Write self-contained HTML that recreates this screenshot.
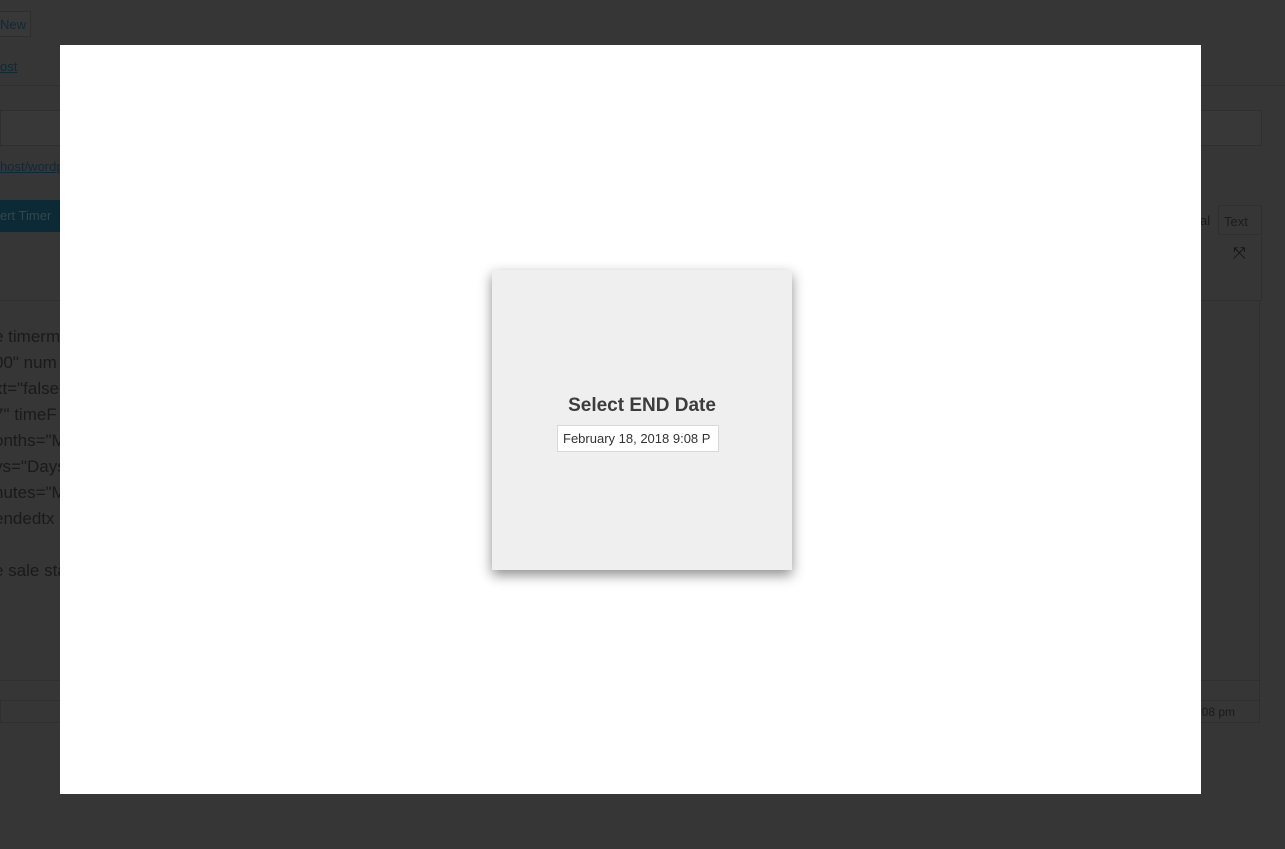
<!DOCTYPE html>
<html><head><style>
*{margin:0;padding:0;box-sizing:border-box}
body{width:1285px;height:849px;background:#363636;position:relative;overflow:hidden;font-family:"Liberation Sans",sans-serif;color:#1a1a1a}
.a{position:absolute}
.ed{font-size:17px;color:#1a1a1a}
</style></head><body>
<div class="a" style="left:-5px;top:11px;width:36px;height:26px;border:1px solid #2e2e2e;background:#383838;font-size:13px;padding:5px 0 0 4px;color:#0e2a36">New</div>
<div class="a" style="left:0;top:59px;font-size:13px;color:#0e2a36;text-decoration:underline">ost</div>
<div class="a" style="left:0;top:85px;width:1285px;height:1px;background:#2f2f2f"></div>
<div class="a" style="left:0;top:110px;width:1262px;height:36px;border:1px solid #2f2f2f;background:#383838"></div>
<div class="a" style="left:0;top:159px;font-size:13px;color:#0e2a36;text-decoration:underline">host/wordpress</div>
<div class="a" style="left:0;top:200px;width:62px;height:32px;background:#0b2a36;color:#34454c;font-size:13px;padding:8px 0 0 0">ert Timer</div>
<div class="a" style="left:1218px;top:205px;width:44px;height:30px;border:1px solid #303030;font-size:13px;padding:8px 0 0 5px;color:#1c1c1c">Text</div>
<div class="a" style="left:1200px;top:213px;font-size:13px">al</div>
<div class="a" style="left:1233px;top:245px;font-size:16px;color:#111">⤧</div>
<div class="a" style="left:0;top:236px;width:1262px;height:65px;border-bottom:1px solid #2f2f2f;border-right:1px solid #2f2f2f"></div>
<div class="a" style="left:1259px;top:300px;width:1px;height:400px;background:#2f2f2f"></div>
<div class="a" style="left:0;top:680px;width:1260px;height:1px;background:#2f2f2f"></div>
<div class="a" style="left:0;top:700px;width:1260px;height:23px;border:1px solid #2f2f2f"></div>
<div class="a" style="left:1185px;top:705px;font-size:12px">t 7:08 pm</div>
<div class="a ed" style="left:-6px;top:324px;line-height:26px">e timerm<br>00" num<br>xt="false<br>7" timeF<br>onths="M<br>ys="Days<br>nutes="M<br>endedtx<br><br>e sale sta</div>
<div class="a" style="left:60px;top:45px;width:1141px;height:749px;background:#fff"></div>
<div class="a" style="left:492px;top:270px;width:300px;height:300px;background:#efefef;box-shadow:0 5px 12px rgba(0,0,0,.45)"></div>
<div class="a" style="left:492px;top:395px;width:300px;text-align:center;font-size:19px;font-weight:bold;color:#3c3c3c">Select END Date</div>
<div class="a" style="left:557px;top:425px;width:162px;height:27px;background:#fff;border:1px solid #d8d8d8;font-size:13px;color:#333;padding:5px 0 0 5px;white-space:nowrap;overflow:hidden">February 18, 2018 9:08 P</div>
</body></html>
